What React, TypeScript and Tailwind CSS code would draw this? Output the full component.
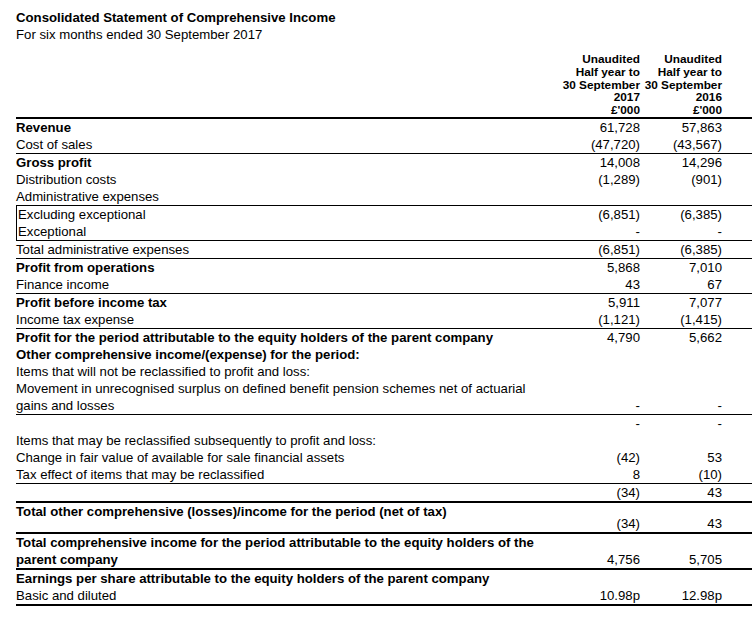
import { ReactNode } from 'react'

type Row = {
  label: ReactNode
  a?: string
  b?: string
  bold?: boolean
  top?: 'thin' | 'thick'
  boxed?: boolean
  tall?: boolean
  gap?: boolean
}

const rows: Row[] = [
  { label: 'Revenue', a: '61,728', b: '57,863', bold: true, top: 'thick' },
  { label: 'Cost of sales', a: '(47,720)', b: '(43,567)' },
  { label: 'Gross profit', a: '14,008', b: '14,296', bold: true, top: 'thin' },
  { label: 'Distribution costs', a: '(1,289)', b: '(901)' },
  { label: 'Administrative expenses' },
  { label: 'Excluding exceptional', a: '(6,851)', b: '(6,385)', top: 'thin', boxed: true },
  { label: 'Exceptional', a: '-', b: '-', boxed: true },
  { label: 'Total administrative expenses', a: '(6,851)', b: '(6,385)', top: 'thin' },
  { label: 'Profit from operations', a: '5,868', b: '7,010', bold: true, top: 'thin' },
  { label: 'Finance income', a: '43', b: '67' },
  { label: 'Profit before income tax', a: '5,911', b: '7,077', bold: true, top: 'thin' },
  { label: 'Income tax expense', a: '(1,121)', b: '(1,415)' },
  { label: 'Profit for the period attributable to the equity holders of the parent company', a: '4,790', b: '5,662', bold: true, top: 'thin' },
  { label: 'Other comprehensive income/(expense) for the period:', bold: true },
  { label: 'Items that will not be reclassified to profit and loss:' },
  { label: <>Movement in unrecognised surplus on defined benefit pension schemes net of actuarial<br />gains and losses</>, a: '-', b: '-' },
  { label: '', a: '-', b: '-', top: 'thin', gap: true },
  { label: 'Items that may be reclassified subsequently to profit and loss:' },
  { label: 'Change in fair value of available for sale financial assets', a: '(42)', b: '53' },
  { label: 'Tax effect of items that may be reclassified', a: '8', b: '(10)' },
  { label: '', a: '(34)', b: '43', top: 'thin' },
  { label: 'Total other comprehensive (losses)/income for the period (net of tax)', a: '(34)', b: '43', bold: true, top: 'thick', tall: true },
  { label: <>Total comprehensive income for the period attributable to the equity holders of the<br />parent company</>, a: '4,756', b: '5,705', bold: true, top: 'thick' },
  { label: 'Earnings per share attributable to the equity holders of the parent company', bold: true, top: 'thick' },
  { label: 'Basic and diluted', a: '10.98p', b: '12.98p' },
]

function StatementRow({ row }: { row: Row }) {
  const border =
    row.top === 'thick' ? 'border-t-2 border-black' :
    row.top === 'thin' ? 'border-t border-black' : ''
  return (
    <div className={`flex ${border} ${row.tall ? 'h-[31px]' : ''} ${row.gap ? 'h-[18px]' : ''}`}>
      <div className={`flex flex-1 min-w-0 ${row.boxed ? 'border-l border-black pl-[1px]' : ''}`}>
        <div className={`self-start whitespace-nowrap ${row.bold ? 'font-bold' : ''}`}>
          {row.label || '\u00a0'}
        </div>
      </div>
      <div className="w-[79px] self-end text-right">{row.a}</div>
      <div className="w-[82px] self-end text-right">{row.b}</div>
      <div className="w-[30px]" />
    </div>
  )
}

export default function App() {
  return (
    <div className="w-[752px] h-[628px] overflow-hidden bg-white text-black font-['Liberation_Sans',Arial,sans-serif]">
      <div className="pl-[16px] pt-[9px] text-[13.2px] leading-[17px]">
        <div className="font-bold">Consolidated Statement of Comprehensive Income</div>
        <div>For six months ended 30 September 2017</div>
      </div>

      <div className="ml-[16px] mt-[10px] flex font-bold text-[11.8px] leading-[12.8px]">
        <div className="flex-1" />
        <div className="w-[79px] text-right whitespace-nowrap">Unaudited<br />Half year to<br />30 September<br />2017<br />£'000</div>
        <div className="w-[82px] text-right whitespace-nowrap">Unaudited<br />Half year to<br />30 September<br />2016<br />£'000</div>
        <div className="w-[30px]" />
      </div>

      <div className="ml-[16px] text-[13.2px] leading-[17px] border-b-2 border-black">
        {rows.map((row, i) => <StatementRow key={i} row={row} />)}
      </div>
    </div>
  )
}
